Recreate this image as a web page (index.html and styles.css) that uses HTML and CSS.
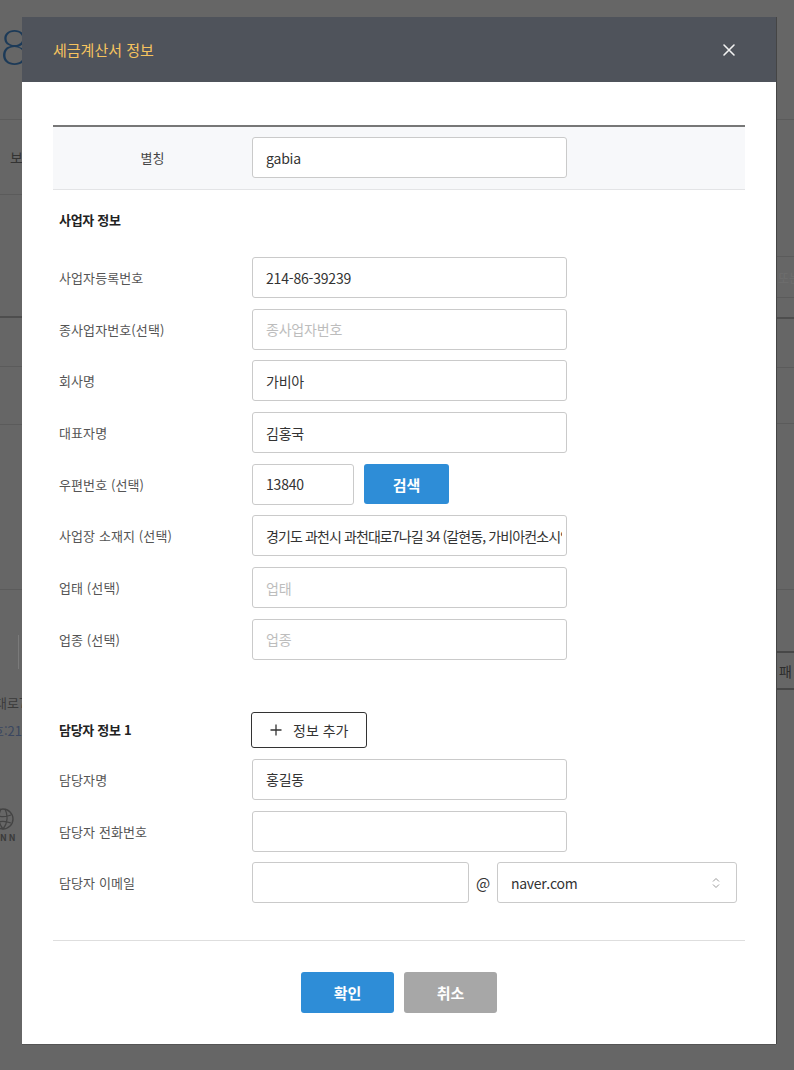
FILE: index.html
```html
<!DOCTYPE html>
<html lang="ko">
<head>
<meta charset="utf-8">
<title>세금계산서 정보</title>
<link rel="stylesheet" href="styles.css">
</head>
<body>
<div class="page">
  <div class="bg-col bg-left">
    <div class="bg-row bl1"><span class="big-num">8</span></div>
    <div class="bg-row bl2"><span class="bg-text">보</span></div>
    <div class="bg-row bl3 dark"></div>
    <div class="bg-row bl4"></div>
    <div class="bg-row bl5"></div>
    <div class="bg-row bl6"></div>
    <div class="bl7">
      <div class="bg-box"></div>
      <p class="bg-line">대로7</p>
      <p class="bg-line blue">호:21</p>
      <svg class="bg-globe" width="24" height="24" viewBox="0 0 24 24"><circle cx="12" cy="12" r="10" fill="none" stroke="#444" stroke-width="1.4"/><path d="M4 8c5 2 11 2 16 0M4 16c5-2 11-2 16 0M10 2c-3 6-3 14 2 20M14 2c3 6 3 14-2 20" fill="none" stroke="#444" stroke-width="1.2"/></svg>
      <p class="bg-nn">NN</p>
    </div>
  </div>
  <div class="bg-mid"></div>
  <div class="bg-col bg-right">
    <div class="bg-row br1"></div>
    <div class="bg-row br2"></div>
    <div class="bg-row br3"><span class="bg-faint">또는</span></div>
    <div class="bg-row br4 dark"></div>
    <div class="bg-row br5"></div>
    <div class="bg-row br6"></div>
    <div class="bg-row br7"></div>
    <div class="bg-row br8 darker"></div>
    <div class="bg-row br9 darker"><span class="bg-text">패</span></div>
  </div>
</div>

<div class="modal">
  <div class="modal-header">
    <h2 class="modal-title">세금계산서 정보</h2>
    <button class="modal-close" type="button" aria-label="닫기">
      <svg width="14" height="14" viewBox="0 0 14 14"><path d="M2 2L12 12M12 2L2 12" stroke="#f2f2f2" stroke-width="1.6" stroke-linecap="round"/></svg>
    </button>
  </div>

  <div class="modal-body">
    <div class="alias-row">
      <div class="alias-label">별칭</div>
      <input class="input alias-input" type="text" value="gabia">
    </div>

    <h3 class="section-title">사업자 정보</h3>
    <div class="form-rows">
      <div class="form-row"><label class="form-label">사업자등록번호</label><input class="input" type="text" value="214-86-39239"></div>
      <div class="form-row"><label class="form-label">종사업자번호(선택)</label><input class="input" type="text" placeholder="종사업자번호"></div>
      <div class="form-row"><label class="form-label">회사명</label><input class="input" type="text" value="가비아"></div>
      <div class="form-row"><label class="form-label">대표자명</label><input class="input" type="text" value="김홍국"></div>
      <div class="form-row"><label class="form-label">우편번호 (선택)</label><input class="input zip-input" type="text" value="13840"><button class="btn btn-blue btn-search" type="button">검색</button></div>
      <div class="form-row"><label class="form-label">사업장 소재지 (선택)</label><input class="input addr-input" type="text" value="경기도 과천시 과천대로7나길 34 (갈현동, 가비아컨소시엄)"></div>
      <div class="form-row"><label class="form-label">업태 (선택)</label><input class="input" type="text" placeholder="업태"></div>
      <div class="form-row"><label class="form-label">업종 (선택)</label><input class="input" type="text" placeholder="업종"></div>
    </div>

    <div class="contact-head">
      <h3 class="contact-title">담당자 정보 1</h3>
      <button class="btn-outline" type="button">
        <svg width="12" height="12" viewBox="0 0 12 12"><path d="M6 0.5V11.5M0.5 6H11.5" stroke="#333" stroke-width="1.3"/></svg>
        <span>정보 추가</span>
      </button>
    </div>

    <div class="form-rows contact-rows">
      <div class="form-row"><label class="form-label">담당자명</label><input class="input" type="text" value="홍길동"></div>
      <div class="form-row"><label class="form-label">담당자 전화번호</label><input class="input" type="text" value=""></div>
      <div class="form-row"><label class="form-label">담당자 이메일</label><input class="input email-input" type="text" value=""><span class="at">@</span>
        <div class="select"><span>naver.com</span>
          <svg width="8" height="12" viewBox="0 0 8 12"><path d="M1 4.5L4 1.5L7 4.5M1 7.5L4 10.5L7 7.5" fill="none" stroke="#9a9a9a" stroke-width="1"/></svg>
        </div>
      </div>
    </div>
  </div>

  <div class="modal-footer">
    <button class="btn btn-blue btn-footer" type="button">확인</button>
    <button class="btn btn-gray btn-footer" type="button">취소</button>
  </div>
</div>
</body>
</html>
```
FILE: styles.css
```css
* { box-sizing: border-box; }
html, body { margin: 0; padding: 0; }
body {
  width: 794px;
  height: 1070px;
  overflow: hidden;
  position: relative;
  background: #666666;
  font-family: "Noto Sans CJK KR", "Noto Sans", sans-serif;
  color: #333;
}

/* ---------- dimmed background page ---------- */
.page {
  display: grid;
  grid-template-columns: 22px 754px 18px;
  height: 1070px;
}
.bg-col { display: flex; flex-direction: column; overflow: hidden; }
.bg-row { flex: none; border-bottom: 1px solid #5b5b5b; }
.bg-row.dark { border-bottom: 2px solid #4e4e4e; }
.bg-row.darker { border-bottom: 2px solid #474747; }
.bl1 { height: 120px; }
.big-num {
  display: block;
  padding-top: 18px;
  font-family: "Lato", "Noto Sans", sans-serif;
  font-weight: 300;
  font-size: 50px;
  line-height: 56px;
  color: #1c3a58;
}
.bl2 { height: 75px; display: flex; align-items: center; }
.bg-text { font-size: 14px; color: #333; padding-left: 10px; line-height: 1; }
.bl3 { height: 123px; }
.bl4 { height: 49px; }
.bl5 { height: 58px; }
.bl6 { height: 165px; }
.bl7 { flex: none; }
.bg-box { width: 19px; height: 34px; margin-top: 45px; border-right: 1px solid #7a7a7a; }
.bg-line { margin: 0; font-size: 13px; line-height: 28px; color: #3a3a3a; white-space: nowrap; margin-left: -5px; }
.bg-line:first-of-type { margin-top: 20px; }
.bg-line.blue { color: #3a4660; margin-left: -8px; }
.bg-globe { display: block; margin: 62px 0 0 -9px; }
.bg-nn { margin: 0; font-size: 9px; font-weight: bold; letter-spacing: 2px; color: #3a3a3a; }

.br1 { height: 120px; }
.br2 { height: 137px; }
.br3 { height: 41px; display: flex; align-items: center; }
.bg-faint { font-size: 12px; color: #6e6e6e; padding-left: 2px; white-space: nowrap; }
.br4 { height: 21px; }
.br5 { height: 49px; }
.br6 { height: 56px; }
.br7 { height: 166px; }
.br8 { height: 63px; }
.br9 { height: 37px; display: flex; align-items: center; }
.br9 .bg-text { padding-left: 3px; color: #2c2c2c; }

/* ---------- modal ---------- */
.modal {
  position: absolute;
  left: 22px;
  top: 17px;
  width: 754px;
  background: #fff;
  box-shadow: 1px 0 0 #454545, 0 1px 0 #555;
}
.modal-header {
  height: 65px;
  background: #4f535b;
  display: flex;
  align-items: center;
  justify-content: space-between;
  padding: 0 40px 0 31px;
}
.modal-title {
  margin: 0;
  font-size: 15px;
  font-weight: normal;
  letter-spacing: 0;
  color: #f6c35f;
  line-height: 20px;
}
.modal-close {
  background: none;
  border: 0;
  padding: 0;
  width: 14px;
  height: 14px;
  display: flex;
  cursor: pointer;
}

.modal-body { padding: 43px 31px 0; }

.alias-row {
  display: flex;
  align-items: center;
  background: #f7f8fa;
  border-top: 2px solid #777;
  border-bottom: 1px solid #e3e4e6;
  padding: 10px 0 11px;
}
.alias-label {
  width: 199px;
  text-align: center;
  font-size: 13px;
  color: #444;
}
.alias-input { height: 40px; }

.section-title {
  margin: 20px 0 27px 6px;
  font-size: 13px;
  font-weight: bold;
  line-height: 20px;
  color: #222;
  letter-spacing: -0.3px;
}

.form-rows { display: flex; flex-direction: column; gap: 10.7px; }
.form-row { display: flex; align-items: center; height: 41px; }
.form-label {
  width: 199px;
  flex: none;
  padding-left: 6px;
  font-size: 13px;
  color: #555;
  letter-spacing: 0.1px;
  white-space: nowrap;
}

.input {
  width: 315px;
  height: 41px;
  flex: none;
  border: 1px solid #cacaca;
  border-radius: 3px;
  padding: 0 13px;
  font-family: "Noto Sans CJK KR", "Noto Sans", sans-serif;
  font-size: 14px;
  letter-spacing: -0.2px;
  color: #333;
  background: #fff;
  outline: none;
}
.input::placeholder { color: #bdbdbd; }
.addr-input { letter-spacing: -0.9px; padding-right: 4px; }
.zip-input { width: 102px; }
.email-input { width: 217px; }

.btn {
  border: 0;
  border-radius: 3px;
  color: #fff;
  font-family: "Noto Sans CJK KR", "Noto Sans", sans-serif;
  font-size: 15px;
  font-weight: bold;
  cursor: pointer;
  padding: 0;
}
.btn-blue { background: #2e8dd7; }
.btn-gray { background: #a7a7a7; }
.btn-search { width: 85px; height: 40px; margin-left: 10px; }

.contact-head { display: flex; align-items: center; margin-top: 52px; }
.contact-title {
  width: 199px;
  margin: 0;
  padding-left: 6px;
  font-size: 13px;
  font-weight: bold;
  color: #222;
  letter-spacing: -0.3px;
}
.btn-outline {
  width: 116px;
  height: 36px;
  margin-left: -1px;
  display: flex;
  align-items: center;
  gap: 11px;
  padding: 0 0 0 18px;
  background: #fff;
  border: 1px solid #333;
  border-radius: 3px;
  font-family: "Noto Sans CJK KR", "Noto Sans", sans-serif;
  font-size: 14px;
  color: #333;
  cursor: pointer;
}
.contact-rows { margin-top: 11px; }
.at {
  width: 28px;
  text-align: center;
  font-size: 15px;
  color: #333;
}
.select {
  width: 240px;
  height: 41px;
  flex: none;
  display: flex;
  align-items: center;
  justify-content: space-between;
  padding: 0 16px 0 13px;
  border: 1px solid #cacaca;
  border-radius: 3px;
  font-size: 14px;
  letter-spacing: -0.3px;
  color: #333;
}

.modal-footer {
  margin: 37px 31px 0;
  border-top: 1px solid #dedede;
  padding: 31px 0;
  display: flex;
  justify-content: center;
  gap: 10px;
}
.btn-footer { width: 93px; height: 41px; }
```
